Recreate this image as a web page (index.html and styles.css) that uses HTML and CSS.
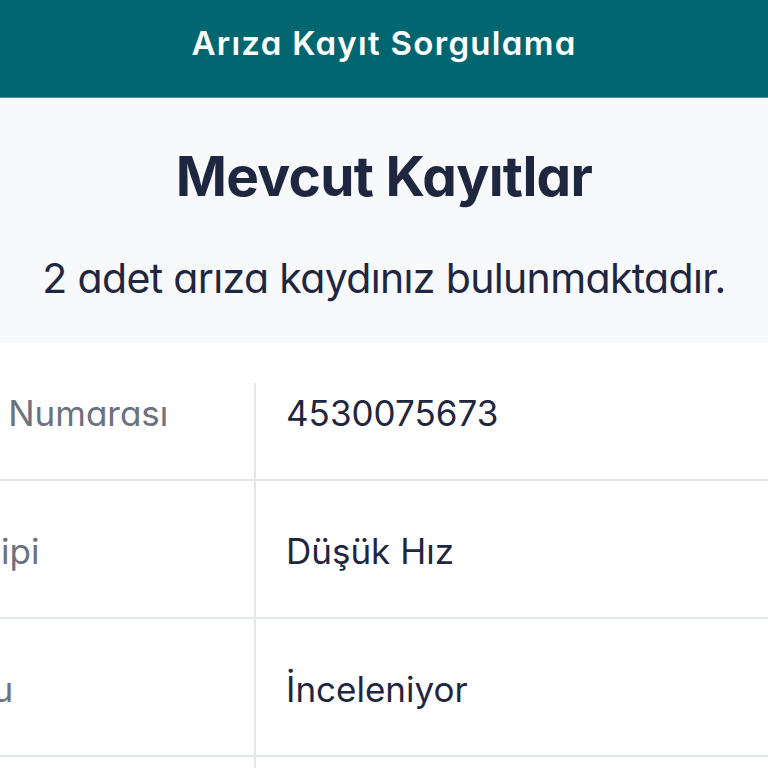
FILE: index.html
```html
<!DOCTYPE html>
<html lang="tr">
<head>
<meta charset="utf-8">
<title>Arıza Kayıt Sorgulama</title>
<link rel="stylesheet" href="styles.css">
</head>
<body>
<header class="topbar">
  <h1 class="topbar-title">Arıza Kayıt Sorgulama</h1>
</header>
<section class="summary">
  <h2 class="summary-title">Mevcut Kayıtlar</h2>
  <p class="summary-text">2 adet arıza kaydınız bulunmaktadır.</p>
</section>
<main class="records">
  <div class="table-scroll" id="tableScroll">
    <table class="record-table">
      <tbody>
        <tr class="row row-first">
          <th class="cell label">Hizmet Numarası</th>
          <td class="cell value">4530075673</td>
        </tr>
        <tr class="row">
          <th class="cell label">Arıza Tipi</th>
          <td class="cell value">Düşük Hız</td>
        </tr>
        <tr class="row">
          <th class="cell label">Durumu</th>
          <td class="cell value">İnceleniyor</td>
        </tr>
        <tr class="row">
          <th class="cell label">Kayıt Tarihi</th>
          <td class="cell value">12.03.2024</td>
        </tr>
      </tbody>
    </table>
  </div>
</main>
<script src="script.js"></script>
</body>
</html>
```

FILE: styles.css
```css
html, body {
  margin: 0;
  padding: 0;
}
body {
  font-family: Inter, "Noto Sans", sans-serif;
  font-feature-settings: "cv11" 1;
  background: #ffffff;
  color: #1f2640;
  width: 768px;
  height: 768px;
  overflow: hidden;
}
.topbar {
  background: #016670;
  height: 97px;
  border-bottom: 1px solid #4d939a;
  display: flex;
  align-items: center;
  justify-content: center;
  box-sizing: content-box;
}
.topbar-title {
  margin: 0;
  color: #ffffff;
  font-size: 33px;
  font-weight: 600;
  letter-spacing: 1.3px;
  line-height: 33px;
  padding-bottom: 11px;
}
.summary {
  background: #f7f9fb;
  height: 245px;
  display: flex;
  flex-direction: column;
  align-items: center;
  box-sizing: border-box;
  padding-top: 46px;
}
.summary-title {
  margin: 0;
  font-size: 55px;
  font-weight: 700;
  letter-spacing: -0.7px;
  line-height: 64px;
  color: #1f2640;
}
.summary-text {
  margin: 46px 0 0 0;
  font-size: 41px;
  font-weight: 400;
  letter-spacing: -0.65px;
  line-height: 48px;
  color: #1f2640;
}
.records {
  background: #ffffff;
  padding-top: 40px;
}
.table-scroll {
  width: 768px;
  overflow: hidden;
}
.record-table {
  border-collapse: separate;
  border-spacing: 0;
  table-layout: fixed;
  width: 916px;
}
.cell {
  box-sizing: border-box;
  font-size: 35px;
  line-height: 42px;
  font-weight: 400;
  letter-spacing: 0;
  text-align: left;
  padding: 49px 30px 45px 30px;
  border-bottom: 2px solid #e3e6eb;
  white-space: nowrap;
  overflow: hidden;
}
.label {
  width: 404px;
  color: #6b7181;
  border-right: 2px solid #e3e6eb;
}
.value {
  width: 512px;
  color: #1f2640;
}
.row-first .cell {
  padding-top: 9px;
}
```

FILE: script.js
```js
document.getElementById('tableScroll').scrollLeft = 150;
```
